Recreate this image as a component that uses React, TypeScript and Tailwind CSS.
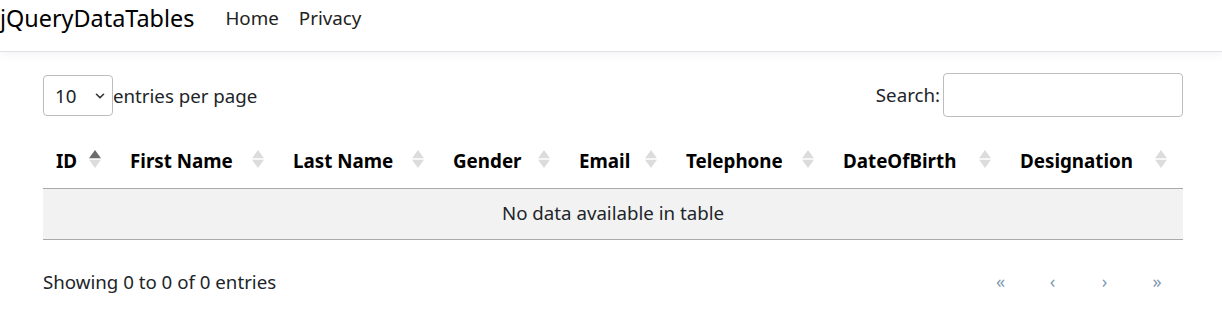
import { ChevronDown } from 'lucide-react';

const columns = [
  { label: 'ID', width: 'w-[74px]', sorted: true },
  { label: 'First Name', width: 'w-[163px]' },
  { label: 'Last Name', width: 'w-[160px]' },
  { label: 'Gender', width: 'w-[126px]' },
  { label: 'Email', width: 'w-[107px]' },
  { label: 'Telephone', width: 'w-[157px]' },
  { label: 'DateOfBirth', width: 'w-[177px]' },
  { label: 'Designation', width: 'w-[176px]' },
];

function SortIcon({ sorted }: { sorted?: boolean }) {
  return (
    <svg viewBox="0 0 12 18" className="absolute right-[16px] top-[15px] h-[18px] w-[12px]">
      <path d="M6 0 L12 8.3 L0 8.3 Z" fill={sorted ? '#6b6b6b' : '#dcdcdc'} />
      <path d="M6 18 L12 9.7 L0 9.7 Z" fill="#dcdcdc" />
    </svg>
  );
}

export default function App() {
  return (
    <div className="min-h-[309px] bg-white font-['Noto_Sans',sans-serif] text-[#212529]">
      <nav className="flex h-[52px] items-start border-b border-[#dee2e6] shadow-[0_4px_8px_rgba(0,0,0,0.04)]">
        <span className="pt-[2px] text-[23.4px] leading-[32px] text-black">jQueryDataTables</span>
        <div className="ml-[31px] flex gap-[20px] pt-[4px] text-[18.8px] leading-[28px] text-[#222]">
          <a>Home</a>
          <a>Privacy</a>
        </div>
      </nav>

      <main className="ml-[43px] w-[1140px] pt-[21px]">
        <div className="flex items-center justify-between">
          <div className="flex items-center">
            <div className="relative flex h-[41px] w-[70px] items-center rounded-[4px] border border-[#bdbdbd] pl-[11px] pt-[3px] text-[18.7px]">
              10
              <ChevronDown className="absolute right-[5px] top-[13px] h-[14px] w-[14px] text-[#333]" strokeWidth={2.8} />
            </div>
            <span className="pt-[3px] text-[18.7px]">entries per page</span>
          </div>
          <div className="flex items-center">
            <span className="text-[18.7px]">Search:</span>
            <div className="ml-[3px] h-[44px] w-[240px] rounded-[4px] border border-[#bdbdbd]" />
          </div>
        </div>

        <table className="mt-[18px] w-full table-fixed border-collapse">
          <thead>
            <tr className="border-b border-[#aaaaaa]">
              {columns.map((c) => (
                <th
                  key={c.label}
                  className={`${c.width} relative h-[53px] pl-[13px] text-left text-[18.8px] font-bold text-black`}
                >
                  {c.label}
                  <SortIcon sorted={c.sorted} />
                </th>
              ))}
            </tr>
          </thead>
          <tbody>
            <tr className="border-b border-[#aaaaaa] bg-[#f2f2f2]">
              <td colSpan={8} className="h-[51px] text-center text-[18.7px]">
                No data available in table
              </td>
            </tr>
          </tbody>
        </table>

        <div className="mt-[28px] flex items-center justify-between">
          <span className="text-[18.7px]">Showing 0 to 0 of 0 entries</span>
          <div className="flex text-[18px] text-[#7f99b0]">
            <span className="w-[53px] text-center">«</span>
            <span className="w-[51px] text-center">‹</span>
            <span className="w-[53px] text-center">›</span>
            <span className="w-[52px] text-center">»</span>
          </div>
        </div>
      </main>
    </div>
  );
}
